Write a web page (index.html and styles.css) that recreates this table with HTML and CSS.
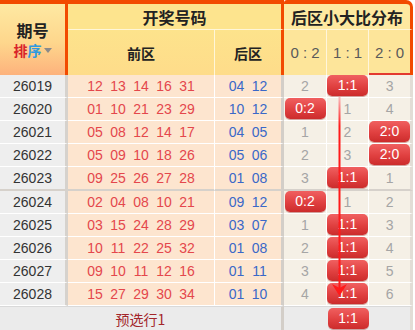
FILE: index.html
```html
<!DOCTYPE html>
<html>
<head>
<meta charset="utf-8">
<link rel="stylesheet" href="styles.css">
</head>
<body>
<div class="wrap">
<table class="chart">
<colgroup>
  <col class="w-issue">
  <col class="w-front">
  <col class="w-back">
  <col class="w-r4">
  <col class="w-r5">
  <col class="w-r6">
</colgroup>
<thead>
<tr class="h1">
  <th class="c-issue" rowspan="2"><div class="t-issue">期号</div><div class="sort"><span class="s1">排</span><span class="s2">序</span><i class="caret"></i></div></th>
  <th class="c-draw" colspan="2">开奖号码</th>
  <th class="c-dist" colspan="3">后区小大比分布</th>
</tr>
<tr class="h2">
  <th class="c-front">前区</th>
  <th class="c-back">后区</th>
  <th class="c-r c4">0 : 2</th>
  <th class="c-r c5">1 : 1</th>
  <th class="c-r c6 sel">2 : 0</th>
</tr>
</thead>
<tbody>
<tr><td class="iss">26019</td><td class="fr"><span>12</span><span>13</span><span>14</span><span>16</span><span>31</span></td><td class="bk"><span>04</span><span>12</span></td><td class="rc">2</td><td class="rc"><b class="pill">1:1</b></td><td class="rc re">3</td></tr>
<tr><td class="iss">26020</td><td class="fr"><span>01</span><span>10</span><span>21</span><span>23</span><span>29</span></td><td class="bk"><span>10</span><span>12</span></td><td class="rc"><b class="pill">0:2</b></td><td class="rc">1</td><td class="rc re">4</td></tr>
<tr><td class="iss">26021</td><td class="fr"><span>05</span><span>08</span><span>12</span><span>14</span><span>17</span></td><td class="bk"><span>04</span><span>05</span></td><td class="rc">1</td><td class="rc">2</td><td class="rc re"><b class="pill">2:0</b></td></tr>
<tr><td class="iss">26022</td><td class="fr"><span>05</span><span>09</span><span>10</span><span>18</span><span>26</span></td><td class="bk"><span>05</span><span>06</span></td><td class="rc">2</td><td class="rc">3</td><td class="rc re"><b class="pill">2:0</b></td></tr>
<tr class="grp"><td class="iss">26023</td><td class="fr"><span>09</span><span>25</span><span>26</span><span>27</span><span>28</span></td><td class="bk"><span>01</span><span>08</span></td><td class="rc">3</td><td class="rc"><b class="pill">1:1</b></td><td class="rc re">1</td></tr>
<tr><td class="iss">26024</td><td class="fr"><span>02</span><span>04</span><span>08</span><span>10</span><span>21</span></td><td class="bk"><span>09</span><span>12</span></td><td class="rc"><b class="pill">0:2</b></td><td class="rc">1</td><td class="rc re">2</td></tr>
<tr><td class="iss">26025</td><td class="fr"><span>03</span><span>15</span><span>24</span><span>28</span><span>29</span></td><td class="bk"><span>03</span><span>07</span></td><td class="rc">1</td><td class="rc"><b class="pill">1:1</b></td><td class="rc re">3</td></tr>
<tr><td class="iss">26026</td><td class="fr"><span>10</span><span>11</span><span>22</span><span>25</span><span>32</span></td><td class="bk"><span>01</span><span>08</span></td><td class="rc">2</td><td class="rc"><b class="pill">1:1</b></td><td class="rc re">4</td></tr>
<tr><td class="iss">26027</td><td class="fr"><span>09</span><span>10</span><span>11</span><span>12</span><span>16</span></td><td class="bk"><span>01</span><span>11</span></td><td class="rc">3</td><td class="rc"><b class="pill">1:1</b></td><td class="rc re">5</td></tr>
<tr><td class="iss">26028</td><td class="fr"><span>15</span><span>27</span><span>29</span><span>30</span><span>34</span></td><td class="bk"><span>01</span><span>10</span></td><td class="rc">4</td><td class="rc"><b class="pill">1:1</b></td><td class="rc re">6</td></tr>
</tbody>
<tfoot>
<tr><td class="pre" colspan="3">预选行1</td><td class="fc"></td><td class="fc"><b class="pill">1:1</b></td><td class="fc fe"></td></tr>
</tfoot>
</table>
<svg class="trend" width="20" height="206" viewBox="0 0 20 206">
  <defs>
    <linearGradient id="fade" x1="0" y1="0" x2="0" y2="30" gradientUnits="userSpaceOnUse">
      <stop offset="0" stop-color="#f9c2c2"/>
      <stop offset="1" stop-color="#ff1a1a"/>
    </linearGradient>
  </defs>
  <rect x="8.5" y="1" width="2" height="194" fill="url(#fade)"/>
  <polygon points="2,188 9.5,192 17,188 9.5,200" fill="#ff1a1a"/>
</svg>
</div>
</body>
</html>
```

FILE: styles.css
```css
html, body {
  margin: 0;
  padding: 0;
  background: #ffffff;
}

.wrap {
  position: relative;
  width: 415px;
  height: 330px;
  overflow: hidden;
  font-family: "Liberation Sans", "Noto Sans CJK SC", Arial, sans-serif;
}

.chart {
  border-collapse: separate;
  border-spacing: 0;
  table-layout: fixed;
  width: 413px;
}

.w-issue { width: 68px; }
.w-front { width: 147px; }
.w-back { width: 69px; }
.w-r4 { width: 43px; }
.w-r5 { width: 42px; }
.w-r6 { width: 44px; }

.chart th,
.chart td {
  box-sizing: border-box;
  padding: 0;
  text-align: center;
  overflow: hidden;
}

/* ---------- header ---------- */
.h1 th {
  height: 30px;
  border-top: 4px solid #f24a00;
  border-bottom: 1px solid #fff6d8;
  font-family: "Noto Sans CJK SC", "Liberation Sans", sans-serif;
  font-size: 16px;
  font-weight: bold;
  color: #222;
  line-height: 24px;
}

.h1 .c-issue {
  border-bottom: none;
  border-right: 3px solid #f24a00;
  background: linear-gradient(#fee9a2 0%, #fed68c 55%, #fdb27c 100%);
  vertical-align: top;
  padding-top: 15px;
}

.t-issue {
  line-height: 22px;
}

.sort {
  margin-top: 1px;
  line-height: 16px;
  font-size: 14px;
  font-weight: bold;
}

.s1 {
  color: #d8232a;
}

.s2 {
  color: #2f9ae0;
}

.caret {
  display: inline-block;
  width: 0;
  height: 0;
  margin-left: 2px;
  vertical-align: 3px;
  border-left: 4px solid transparent;
  border-right: 4px solid transparent;
  border-top: 5px solid #8a8a8a;
}

.h1 .c-draw {
  background: #fde48e;
  border-right: 3px solid #f24a00;
}

.h1 .c-dist {
  background: #fee9a0;
  border-right: 3px solid #f24a00;
  border-top-right-radius: 7px;
  border-top-left-radius: 3px;
}

.h2 th {
  height: 45px;
  font-family: "Noto Sans CJK SC", "Liberation Sans", sans-serif;
  font-size: 14px;
  font-weight: bold;
  color: #222;
}

.h2 .c-front {
  background: linear-gradient(#fde38c, #fedc8a);
  border-right: 1px solid #fff6d8;
}

.h2 .c-back {
  background: linear-gradient(#fde38c, #fedc8a);
  border-right: 3px solid #f24a00;
}

.h2 .c-r {
  background: #fde59a;
  font-family: "Liberation Sans", Arial, sans-serif;
  font-weight: normal;
  font-size: 15px;
  color: #5a5a5a;
  border-right: 1px solid #fff6dc;
}

.h2 .c6 {
  border-right: 3px solid #f24a00;
}

.h2 .sel {
  box-shadow: inset 0 -2px 0 #e33a30;
}

/* ---------- body ---------- */
.chart tbody td {
  height: 23px;
  border-bottom: 1px solid #ffffff;
  font-size: 14px;
  line-height: 22px;
  vertical-align: middle;
}

.chart tbody tr.grp td {
  border-bottom: 2px solid #d6d1cb;
}

.iss {
  background: #eeeeee;
  color: #333333;
  border-right: 3px solid #d6d2cd;
}

.fr,
.bk {
  background: #fde5cf;
  white-space: nowrap;
}

.fr {
  color: #e4474c;
  border-right: 1px solid #ffffff;
}

.bk {
  color: #3a68c8;
  border-right: 3px solid #d3cec8;
}

.fr span,
.bk span {
  display: inline-block;
  width: 23px;
  text-align: center;
}

.rc {
  background: #f5f0e6;
  color: #a5a5a5;
  border-right: 1px solid #ffffff;
}

.rc.re {
  border-right: 3px solid #e2ddd6;
}

.pill {
  display: block;
  width: 41px;
  height: 21px;
  margin: 0 auto 1px;
  border-radius: 5px;
  background: linear-gradient(#f06060 0%, #e04040 55%, #cc2c2c 100%);
  box-shadow: 0 1px 0 rgba(150, 20, 20, 0.35);
  color: #ffffff;
  font-weight: normal;
  font-size: 14px;
  line-height: 21px;
}

/* ---------- footer ---------- */
.chart tfoot td {
  height: 25px;
  background: #ebebeb;
  border-top: 1px solid #d9d9d9;
  vertical-align: middle;
}

.pre {
  font-family: "Noto Sans CJK SC", "Liberation Sans", sans-serif;
  font-size: 14px;
  color: #a3262a;
  border-right: 3px solid #d3cec8;
}

.chart tfoot .fe {
  border-right: 3px solid #e2ddd6;
}

/* ---------- trend overlay ---------- */
.trend {
  position: absolute;
  left: 330px;
  top: 96px;
}
```
